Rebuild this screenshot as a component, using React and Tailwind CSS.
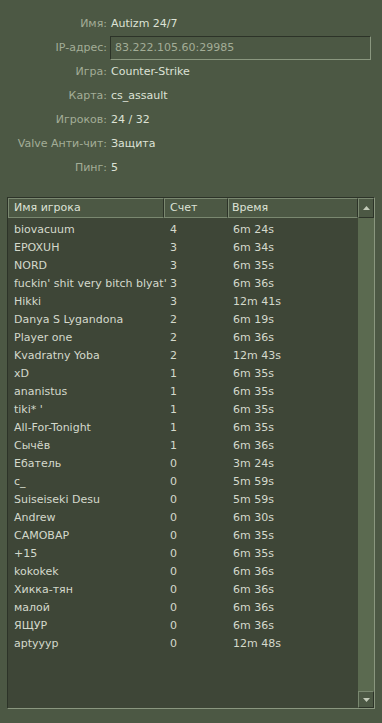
import React from "react";

const info = [
  ["Имя:", "Autizm 24/7"],
  ["IP-адрес:", "83.222.105.60:29985", true],
  ["Игра:", "Counter-Strike"],
  ["Карта:", "cs_assault"],
  ["Игроков:", "24 / 32"],
  ["Valve Анти-чит:", "Защита"],
  ["Пинг:", "5"],
];

const players = [
  ["biovacuum", "4", "6m 24s"],
  ["EPOXUH", "3", "6m 34s"],
  ["NORD", "3", "6m 35s"],
  ["fuckin' shit very bitch blyat'", "3", "6m 36s"],
  ["Hikki", "3", "12m 41s"],
  ["Danya S Lygandona", "2", "6m 19s"],
  ["Player one", "2", "6m 36s"],
  ["Kvadratny Yoba", "2", "12m 43s"],
  ["xD", "1", "6m 35s"],
  ["ananistus", "1", "6m 35s"],
  ["tiki* '", "1", "6m 35s"],
  ["All-For-Tonight", "1", "6m 35s"],
  ["Сычёв", "1", "6m 36s"],
  ["Ебатель", "0", "3m 24s"],
  ["c_", "0", "5m 59s"],
  ["Suiseiseki Desu", "0", "5m 59s"],
  ["Andrew", "0", "6m 30s"],
  ["САМОВАР", "0", "6m 35s"],
  ["+15", "0", "6m 35s"],
  ["kokokek", "0", "6m 36s"],
  ["Хикка-тян", "0", "6m 36s"],
  ["малой", "0", "6m 36s"],
  ["ЯЩУР", "0", "6m 36s"],
  ["aptyyyp", "0", "12m 48s"],
];

export default function App() {
  return (
    <div className="w-[382px] h-[723px] bg-[#4c5844] font-['DejaVu_Sans',sans-serif] text-[11px] overflow-hidden">
      <div className="pt-[12px]">
        {info.map(([label, value, boxed]) => (
          <div key={label} className="flex h-[24px] items-center">
            <div className="w-[107px] text-right text-[#a3ad97] whitespace-nowrap">{label}</div>
            {boxed ? (
              <div className="ml-[3px] w-[261px] h-[24px] flex items-center pl-[4px] border border-t-[#2c3328] border-l-[#2c3328] border-b-[#8a977f] border-r-[#8a977f] text-[#a3ad97]">
                {value}
              </div>
            ) : (
              <div className="ml-[4px] text-[#dde2d6] whitespace-nowrap">{value}</div>
            )}
          </div>
        ))}
      </div>

      <div className="mt-[17px] ml-[7px] w-[368px] h-[512px] flex border border-t-[#2c3328] border-l-[#2c3328] border-b-[#8a977f] border-r-[#8a977f] bg-[#3e4637]">
        <div className="flex-1 flex flex-col">
          <div className="flex h-[20px] bg-[#4c5844] text-[#dde2d6]">
            <div className="w-[156px] flex items-center pl-[5px] border border-[#7a8870] border-r-[#2c3328]">Имя игрока</div>
            <div className="w-[64px] flex items-center pl-[5px] border border-[#7a8870] border-r-[#2c3328]">Счет</div>
            <div className="flex-1 flex items-center pl-[3px] border border-[#7a8870] border-r-[#2c3328]">Время</div>
          </div>
          <div className="pt-[3px]">
            {players.map(([name, score, time], i) => (
              <div key={i} className="flex h-[18px] items-center text-[#d4d9cc] whitespace-nowrap">
                <div className="w-[156px] shrink-0 pl-[6px]">{name}</div>
                <div className="w-[64px] shrink-0 pl-[6px]">{score}</div>
                <div className="flex-1 pl-[5px]">{time}</div>
              </div>
            ))}
          </div>
        </div>
        <div className="w-[16px] flex flex-col">
          <div className="h-[20px] flex items-center justify-center bg-[#4c5844] border border-[#7a8870] border-r-[#2c3328] border-b-[#2c3328]">
            <svg width="7" height="4" viewBox="0 0 7 4"><path d="M0 4 L3.5 0 L7 4 Z" fill="#c3cbb9" /></svg>
          </div>
          <div className="flex-1 bg-[#5b6a50]" />
          <div className="h-[17px] flex items-center justify-center bg-[#4c5844] border border-[#7a8870] border-r-[#2c3328] border-b-[#2c3328]">
            <svg width="7" height="4" viewBox="0 0 7 4"><path d="M0 0 L7 0 L3.5 4 Z" fill="#c3cbb9" /></svg>
          </div>
        </div>
      </div>
    </div>
  );
}
